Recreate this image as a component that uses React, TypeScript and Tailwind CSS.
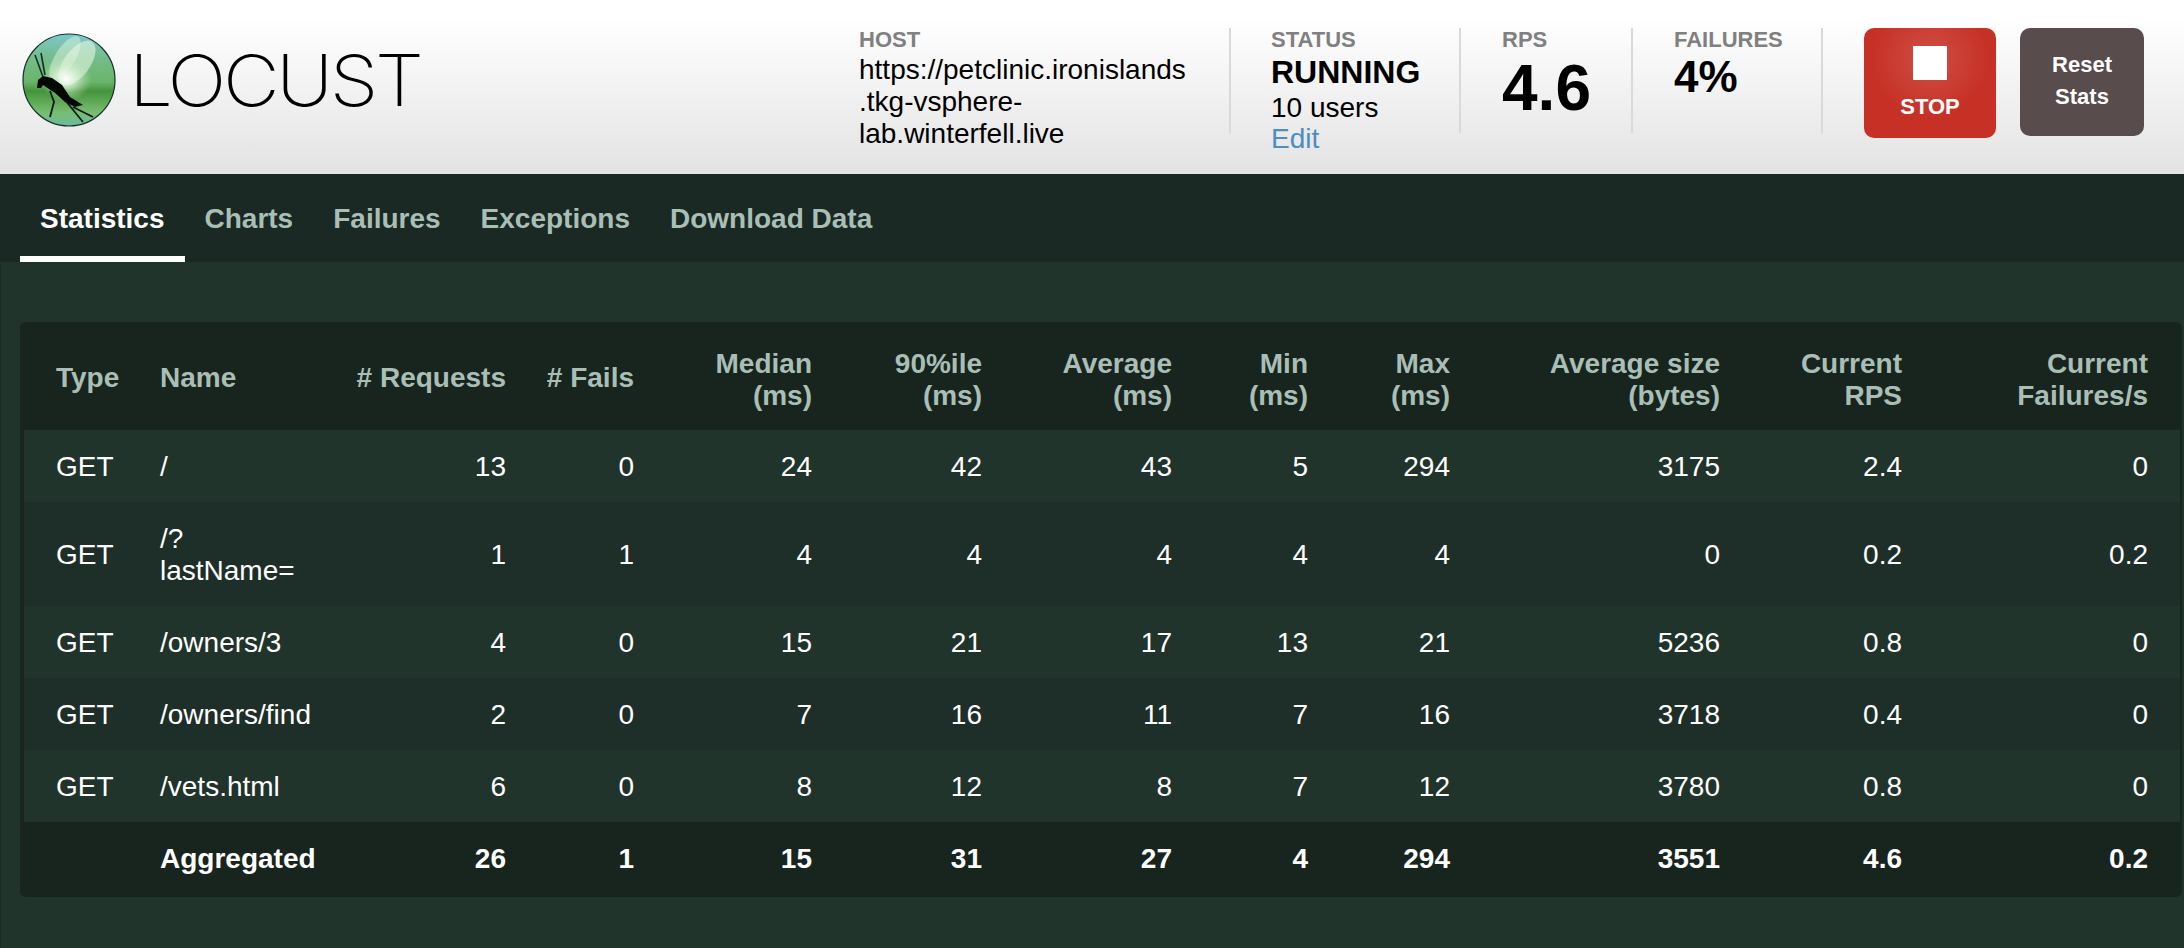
const rows = [
  ["GET", "/", "13", "0", "24", "42", "43", "5", "294", "3175", "2.4", "0"],
  ["GET", "/?lastName=", "1", "1", "4", "4", "4", "4", "4", "0", "0.2", "0.2"],
  ["GET", "/owners/3", "4", "0", "15", "21", "17", "13", "21", "5236", "0.8", "0"],
  ["GET", "/owners/find", "2", "0", "7", "16", "11", "7", "16", "3718", "0.4", "0"],
  ["GET", "/vets.html", "6", "0", "8", "12", "8", "7", "12", "3780", "0.8", "0"],
];
const aggregated = ["", "Aggregated", "26", "1", "15", "31", "27", "4", "294", "3551", "4.6", "0.2"];
const columns = [
  { label: "Type", width: 116 },
  { label: "Name", width: 195 },
  { label: "# Requests", width: 191 },
  { label: "# Fails", width: 128 },
  { label: "Median (ms)", width: 178 },
  { label: "90%ile (ms)", width: 170 },
  { label: "Average (ms)", width: 190 },
  { label: "Min (ms)", width: 136 },
  { label: "Max (ms)", width: 142 },
  { label: "Average size (bytes)", width: 270 },
  { label: "Current RPS", width: 182 },
  { label: "Current Failures/s", width: 258 },
];
const tabs = ["Statistics", "Charts", "Failures", "Exceptions", "Download Data"];

function LocustLogo() {
  return (
    <svg width="94" height="94" viewBox="0 0 94 94" className="shrink-0">
      <defs>
        <linearGradient id="ball" x1="0" y1="0" x2="0" y2="1">
          <stop offset="0" stopColor="#7cc8cc" />
          <stop offset="0.25" stopColor="#74bd8c" />
          <stop offset="0.52" stopColor="#6ab56a" />
          <stop offset="0.62" stopColor="#45943c" />
          <stop offset="0.85" stopColor="#78bd70" />
          <stop offset="1" stopColor="#69bd9c" />
        </linearGradient>
        <radialGradient id="glow" cx="0.5" cy="0.5" r="0.5">
          <stop offset="0" stopColor="#ffffff" stopOpacity="1" />
          <stop offset="0.4" stopColor="#e4f6e0" stopOpacity="0.7" />
          <stop offset="1" stopColor="#b4e2b0" stopOpacity="0" />
        </radialGradient>
      </defs>
      <circle cx="47" cy="47" r="46" fill="url(#ball)" stroke="#17302a" strokeWidth="1.2" />
      <ellipse cx="43" cy="25" rx="10" ry="25" transform="rotate(32 43 25)" fill="#eaf8e6" opacity="0.45" />
      <ellipse cx="55" cy="30" rx="13" ry="26" transform="rotate(36 55 30)" fill="#e6f7e2" opacity="0.6" />
      <ellipse cx="44" cy="46" rx="26" ry="22" fill="url(#glow)" />
      <path d="M13 22 L21 44 M19 20 L23 42" stroke="#1a2c28" strokeWidth="1.6" fill="none" />
      <path d="M15 55 L16 47 L21 43 L30 45 L40 52 L48 64 L61 72 L53 74 L43 69 L33 60 L21 52 L19 55Z" fill="#050807" />
      <path d="M28 58 L32 69 L28 84 M43 67 L61 89 M51 74 L71 84" stroke="#111a18" strokeWidth="1.8" fill="none" />
    </svg>
  );
}

function Stat({ label, children, className }: { label: string; children: React.ReactNode; className: string }) {
  return (
    <div className={`h-[105px] border-r-2 border-[#d9d9d9] ${className}`}>
      <div className="text-[22px] leading-6 font-bold text-[#808080]">{label}</div>
      {children}
    </div>
  );
}

export default function App() {
  return (
    <div className="min-h-screen bg-[#20342c] border-l border-l-[#1c2c26] font-['Liberation_Sans',Arial,sans-serif]">
      <header className="h-[174px] -ml-px flex justify-between bg-gradient-to-b from-white from-10% to-[#e3e3e3]">
        <div className="flex items-start pl-[22px] pt-[33px] gap-[13px]">
          <LocustLogo />
          <span className="mt-[7px] origin-left scale-x-[1.1] text-[71px] leading-[80px] font-extralight tracking-[-3px] text-black font-['Inter',sans-serif]">LOCUST</span>
        </div>
        <div className="flex items-start pt-[28px] pr-[40px]">
          <Stat label="HOST" className="w-[372px]">
            <div className="w-[330px] text-[28px] leading-8 text-black wrap-anywhere mt-[2px]">https://petclinic.ironislands.tkg-vsphere-lab.winterfell.live</div>
          </Stat>
          <Stat label="STATUS" className="w-[190px] ml-[40px]">
            <div className="text-[32px] leading-10 font-bold text-black">RUNNING</div>
            <div className="text-[28px] leading-8 text-black">10 users</div>
            <div className="text-[28px] leading-8 text-[#4a8fc0] mt-[-1px]">Edit</div>
          </Stat>
          <Stat label="RPS" className="w-[131px] ml-[41px]">
            <div className="text-[64px] leading-[72px] font-bold text-black">4.6</div>
          </Stat>
          <Stat label="FAILURES" className="w-[149px] ml-[41px]">
            <div className="text-[44px] leading-[50px] font-bold text-black">4%</div>
          </Stat>
          <button className="ml-[41px] w-[132px] h-[110px] rounded-[10px] bg-[radial-gradient(circle_at_50%_28%,#cf4f45_0%,#c63025_58%)] flex flex-col items-center pt-[18px] text-white text-[22px] font-bold">
            <span className="block size-[34px] bg-white" />
            <span className="mt-[15px] leading-6">STOP</span>
          </button>
          <button className="ml-[24px] w-[124px] h-[108px] pb-[2px] rounded-[10px] bg-[#594c4c] text-white text-[22px] leading-8 font-bold">
            Reset<br />Stats
          </button>
        </div>
      </header>

      <nav className="h-[88px] -ml-px flex bg-[#1a2923] pl-[20px]">
        {tabs.map((tab, i) => (
          <div
            key={tab}
            className={`h-full px-5 pt-[29px] text-[28px] leading-8 font-bold ${i === 0 ? "text-white border-b-[6px] border-white" : "text-[#a9bfb6]"}`}
          >
            {tab}
          </div>
        ))}
      </nav>

      <div className="pt-[60px] pl-[19px] pr-[2px]">
        <div className="rounded-[6px] bg-[#18241e] pt-1 pl-1 pr-0.5 pb-[3px]">
          <table className="w-full table-fixed border-collapse text-[28px] leading-8 text-white">
            <colgroup>
              {columns.map((col) => (
                <col key={col.label} style={{ width: col.width }} />
              ))}
            </colgroup>
            <thead>
              <tr>
                {columns.map((col, i) => (
                  <th
                    key={col.label}
                    className={`font-bold text-[#a9bfb6] ${i < 4 ? "pt-5 pb-5" : "pt-[22px] pb-[18px]"} ${i < 2 ? "text-left" : "text-right"} ${i === 0 ? "pl-8 pr-5" : i === 11 ? "pl-5 pr-8" : "px-5"}`}
                  >
                    {col.label}
                  </th>
                ))}
              </tr>
            </thead>
            <tbody>
              {rows.map((row, r) => (
                <tr key={row[1]} className={r % 2 === 0 ? "bg-[#20342c]" : "bg-[#1e2f29]"}>
                  {row.map((cell, i) => (
                    <td
                      key={i}
                      className={`pt-[21px] pb-[19px] font-normal ${i < 2 ? "text-left" : "text-right"} ${i === 0 ? "pl-8 pr-5" : i === 11 ? "pl-5 pr-8" : "px-5"}`}
                    >
                      {cell === "/?lastName=" ? (
                        <>
                          /?<br />lastName=
                        </>
                      ) : (
                        cell
                      )}
                    </td>
                  ))}
                </tr>
              ))}
              <tr>
                {aggregated.map((cell, i) => (
                  <td
                    key={i}
                    className={`pt-[21px] pb-[19px] font-bold ${i < 2 ? "text-left" : "text-right"} ${i === 0 ? "pl-8 pr-5" : i === 11 ? "pl-5 pr-8" : "px-5"}`}
                  >
                    {cell}
                  </td>
                ))}
              </tr>
            </tbody>
          </table>
        </div>
      </div>
    </div>
  );
}
